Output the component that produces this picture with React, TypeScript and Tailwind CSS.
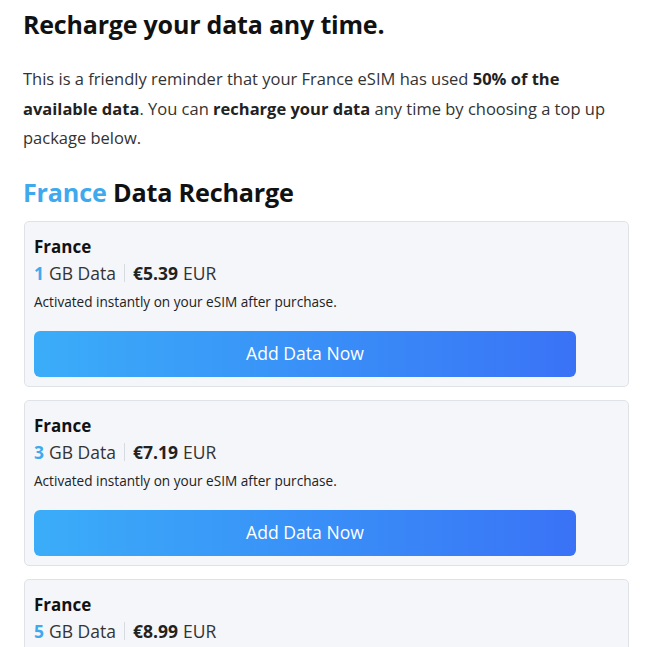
import React from "react";

const plans = [
  { gb: "1", price: "€5.39" },
  { gb: "3", price: "€7.19" },
  { gb: "5", price: "€8.99" },
];

export default function App() {
  return (
    <div
      className="bg-white w-[650px] h-[647px] overflow-hidden pl-[23px] pr-[21px] text-[#222]"
      style={{ fontFamily: '"Open Sans", "Noto Sans", sans-serif' }}
    >
      <h1 className="text-[25px] font-bold text-[#111] leading-[32px] pt-[8px] tracking-[-0.2px]">
        Recharge your data any time.
      </h1>
      <p className="mt-[24px] text-[16.5px] leading-[29.5px] text-[#333]">
        This is a friendly reminder that your France eSIM has used{" "}
        <b className="font-bold text-[#222]">50% of the available data</b>. You can{" "}
        <b className="font-bold text-[#222]">recharge your data</b> any time by choosing a top up package below.
      </p>
      <h2 className="mt-[21px] text-[25.2px] font-bold leading-[36px] text-[#111] tracking-[-0.2px]">
        <span className="text-[#3fa9ee]">France</span> Data Recharge
      </h2>
      <div className="mt-[11px] flex flex-col gap-[13px] pl-px">
        {plans.map((p) => (
          <div
            key={p.gb}
            className="border border-[#dfe3e8] bg-[#f4f6fa] rounded-[5px] pl-[9px] pr-[9px] pt-[12px] pb-[9px] shrink-0"
          >
            <div className="text-[17px] font-bold leading-[25px] text-[#111]">France</div>
            <div className="text-[17.5px] leading-[28px] text-[#333] flex items-center">
              <span className="font-bold text-[#3fa9ee]">{p.gb}</span>
              <span className="ml-[5px]">GB Data</span>
              <span className="mx-[8px] inline-block w-px h-[18px] bg-[#d6dbe1]" />
              <span className="font-bold text-[#222]">{p.price}</span>
              <span className="ml-[5px]">EUR</span>
            </div>
            <div className="text-[13.6px] leading-[24px] text-[#222] mt-[3px]">
              Activated instantly on your eSIM after purchase.
            </div>
            <button className="mt-[17px] w-[542px] h-[46px] rounded-[6px] bg-gradient-to-r from-[#3badf8] to-[#3a72f6] text-white text-[17.6px] flex items-center justify-center">
              Add Data Now
            </button>
          </div>
        ))}
      </div>
    </div>
  );
}
